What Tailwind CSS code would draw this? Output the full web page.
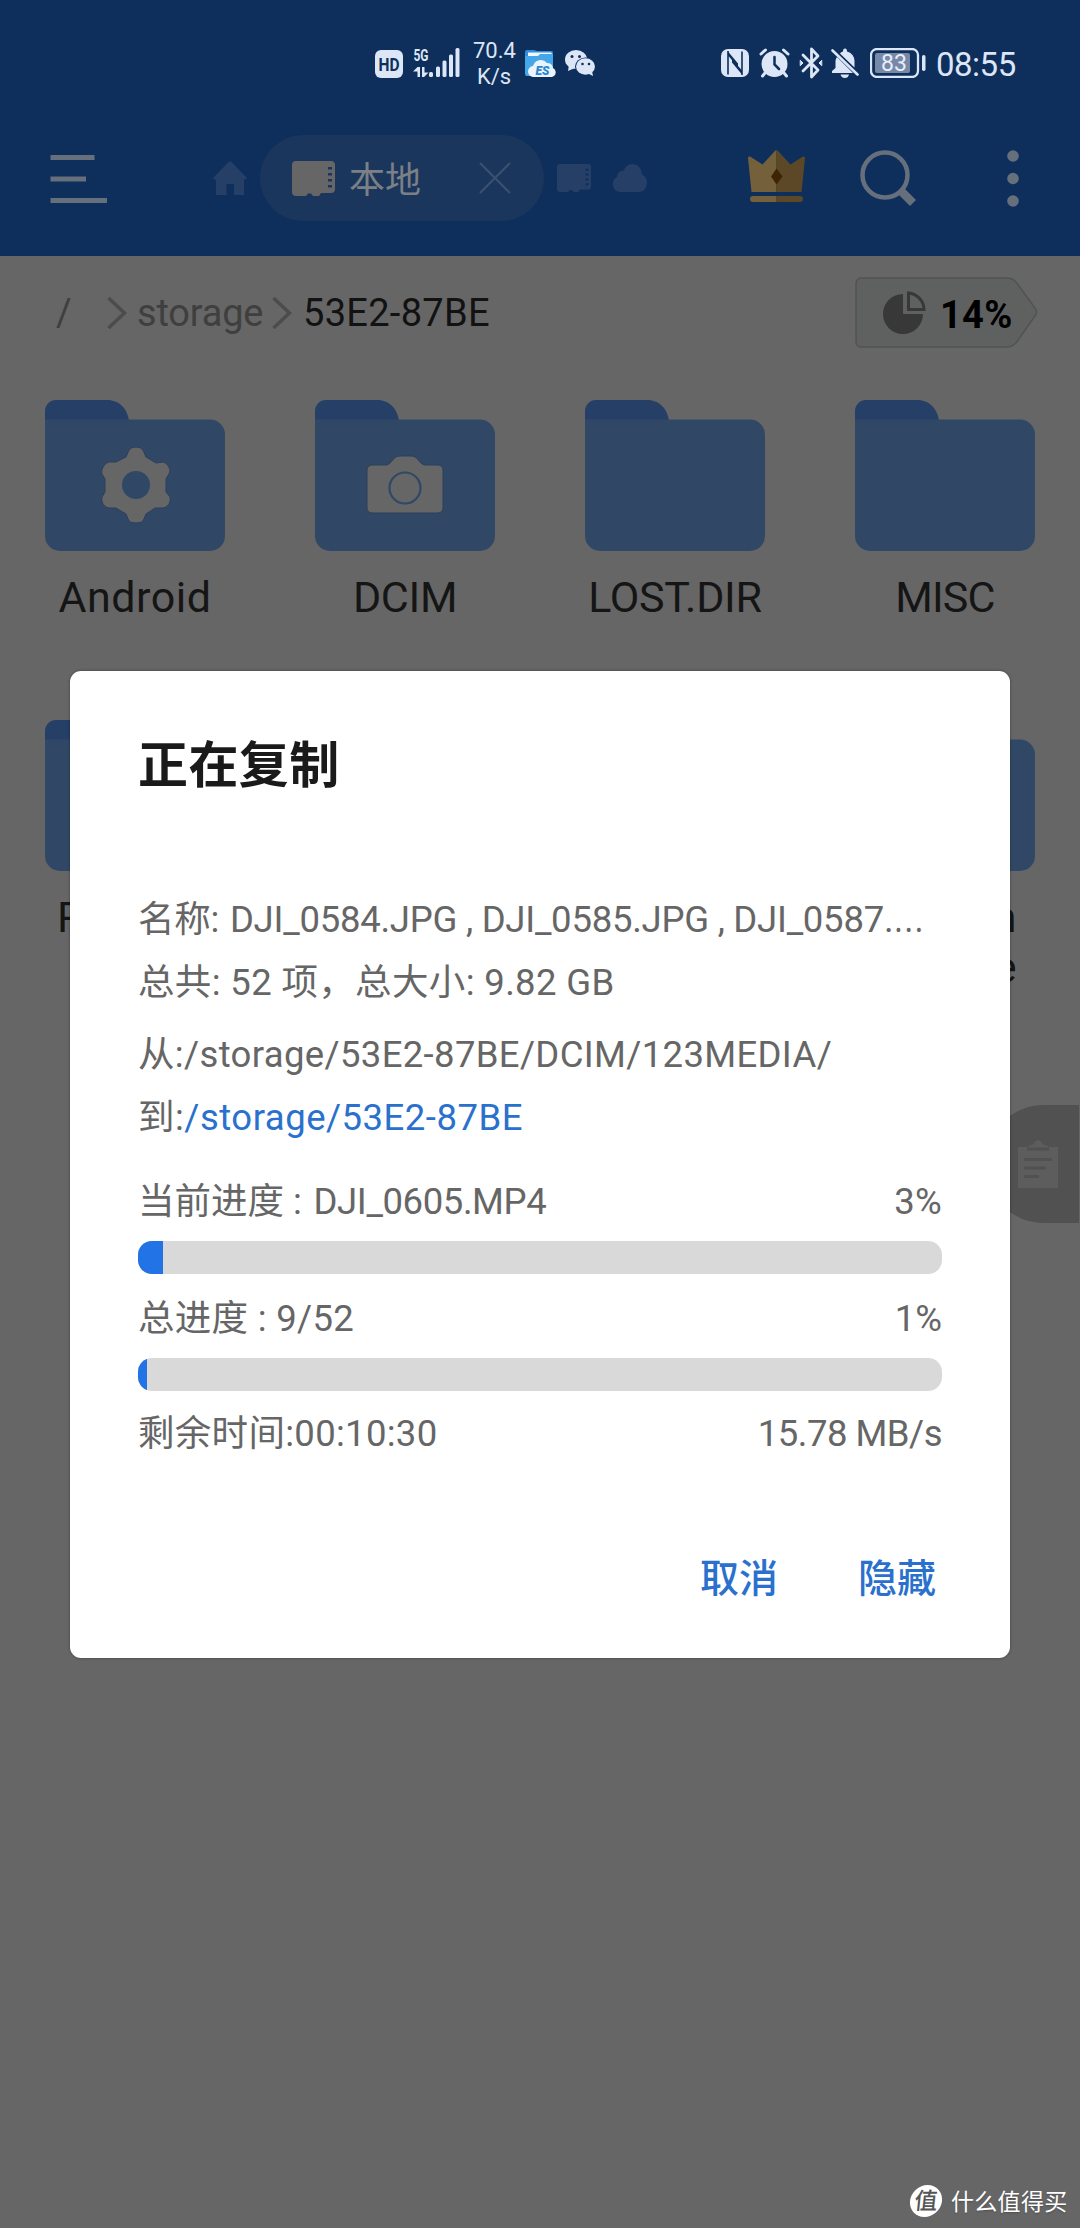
<!DOCTYPE html>
<html lang="zh-CN">
<head>
    <meta charset="UTF-8">
    <title>正在复制</title>
    <script src="https://cdn.jsdelivr.net/npm/@tailwindcss/browser@4"></script>
</head>
<body class="relative w-[1080px] h-[2228px] overflow-hidden bg-[#666666] font-[Roboto,'Noto_Sans_CJK_SC',sans-serif] text-[#151515]">

    <!-- shared shapes -->
    <svg class="hidden">
        <symbol id="folder" viewBox="0 0 180 151">
            <path d="M0 30V11A11 11 0 0 1 11 0H62C75 0 83 9 84.500 24V30Z" fill="#253f66"/>
            <path d="M0 19.500H165A15 15 0 0 1 180 34.500V136A15 15 0 0 1 165 151H15A15 15 0 0 1 0 136Z" fill="#304866"/>
        </symbol>
        <symbol id="sdcard" viewBox="0 0 43 35">
            <path fill-rule="evenodd" d="M4 0H39A4 4 0 0 1 43 4V28A4 4 0 0 1 39 32H29L27 35H21L19 32.500H16L14 35H4A4 4 0 0 1 0 31V4A4 4 0 0 1 4 0ZM36 6V8.500H40V6ZM36 12V14.500H40V12ZM36 18V20.500H40V18ZM36 24V26.500H40V24Z"/>
        </symbol>
    </svg>

    <header class="h-[256px] bg-[#0e2f5c]">
        <!-- status bar -->
        <div class="flex items-center h-[126px] pl-[375px] text-[#dce6f6]">
            <svg class="w-7 h-7 mt-0.5" viewBox="0 0 28 28">
                <rect width="28" height="28" rx="6" fill="#dce6f6"/>
                <text x="3.500" y="20.500" font-size="18" font-weight="700" textLength="21" lengthAdjust="spacingAndGlyphs" fill="#0e2f5c">HD</text>
            </svg>
            <svg class="w-[48px] h-[30px] ml-2.5 overflow-visible" viewBox="0 0 48 30" fill="#dce6f6">
                <text x="0.500" y="13" font-size="17" font-weight="700" textLength="15" lengthAdjust="spacingAndGlyphs">5G</text>
                <path d="M0 23.500L4.500 19H7V29H4.500V23.500ZM9 19H11.500V24.500H15.500L11 29H9Z"/>
                <rect x="16" y="24" width="4" height="5" rx="1.500"/>
                <rect x="23" y="18.500" width="4" height="10.500" rx="1.500"/>
                <rect x="29.500" y="12.500" width="4" height="16.500" rx="1.500"/>
                <rect x="36" y="6.500" width="4" height="22.500" rx="1.500"/>
                <rect x="42.500" y="0" width="4" height="29" rx="1.500"/>
            </svg>
            <div class="w-[42px] ml-3 pt-0.5 text-center text-[22px] leading-[26px]">70.4<br>K/s</div>
            <svg class="w-8 h-7 ml-2.5" viewBox="0 0 32 28">
                <path d="M0 3A2 2 0 0 1 2 1H9L12 2H27A2 2 0 0 1 28 4V24H0Z" fill="#2f8fd8"/>
                <path d="M3 3.500H26L28 6V8H3Z" fill="#f2f8ff"/>
                <path d="M0 7H13L15 5H28V25A2 2 0 0 1 26 27H2A2 2 0 0 1 0 25Z" fill="#46a6ea"/>
                <path d="M9 28A5.500 5.500 0 0 1 8 17A8 8 0 0 1 22 14A6 6 0 0 1 28 19A4.800 4.800 0 0 1 27 28Z" fill="#eaf4ff"/>
                <text x="10.500" y="26" font-size="12" font-weight="900" font-style="italic" textLength="14" lengthAdjust="spacingAndGlyphs" fill="#2b86cf">ES</text>
            </svg>
            <svg class="w-[31px] h-[26px] ml-2" viewBox="0 0 31 26">
                <ellipse cx="11" cy="9.500" rx="11" ry="9.500" fill="#dce6f6"/>
                <path d="M4 15L3 21L10 18Z" fill="#dce6f6"/>
                <ellipse cx="20.500" cy="16.500" rx="10.500" ry="9" fill="#0e2f5c"/>
                <ellipse cx="20.500" cy="16.500" rx="9.500" ry="8.200" fill="#dce6f6"/>
                <path d="M22 23L28 26L27 21Z" fill="#dce6f6"/>
                <g fill="#0e2f5c">
                    <circle cx="7" cy="6.500" r="1.500"/><circle cx="14.500" cy="6.500" r="1.500"/>
                    <circle cx="17.500" cy="14" r="1.300"/><circle cx="24" cy="14" r="1.300"/>
                </g>
            </svg>
            <svg class="w-7 h-7 ml-[125px]" viewBox="0 0 28 28">
                <rect width="28" height="28" rx="7" fill="#dce6f6"/>
                <path d="M7 2V25.500M21 2.500V26" fill="none" stroke="#0e2f5c" stroke-width="1.600"/>
                <path d="M7 2.500L17 14.500V18L7 6.500ZM21 25.500L11 13.500V10L21 21.500Z" fill="#0e2f5c"/>
            </svg>
            <svg class="w-[31px] h-[30px] ml-2.5" viewBox="0 0 31 30" fill="none" stroke="#dce6f6" stroke-width="3" stroke-linecap="round">
                <circle cx="15.500" cy="16" r="13" fill="#dce6f6" stroke="none"/>
                <path d="M2 6L6.500 2M29 6L24.500 2M6 25L3.500 28M25 25L27.500 28"/>
                <path d="M15.500 9V16.500L20 21" stroke="#0e2f5c" stroke-width="2.500"/>
            </svg>
            <svg class="w-6 h-8 ml-[9px]" viewBox="0 0 24 32" fill="none" stroke="#dce6f6" stroke-width="2.800" stroke-linejoin="round" stroke-linecap="round">
                <path d="M4 8L19 23L12.500 30V2L19 9L4 24"/>
                <path d="M1.500 13.500L4 16L1.500 18.500ZM22.500 13.500L20 16L22.500 18.500Z" fill="#dce6f6" stroke-width="1"/>
            </svg>
            <svg class="w-7 h-[30px] ml-2" viewBox="0 0 28 30" fill="#dce6f6">
                <path d="M6 9L22 25H1V23L4.500 20V13Q4.500 11 6 9ZM9 5.500Q10 4 12 3.500Q12 0.500 14 0.500Q16 0.500 16 3.500Q23 5.500 23.500 13V19.500Z"/>
                <path d="M9.500 26.500H18Q17 30 14 30Q10.500 30 9.500 26.500Z"/>
                <path d="M1.500 2.500L26.500 26.500" stroke="#dce6f6" stroke-width="2.600" stroke-linecap="round"/>
            </svg>
            <svg class="w-14 h-[30px] ml-[11px]" viewBox="0 0 56 30">
                <rect x="1" y="1" width="47" height="28" rx="6" fill="none" stroke="#dce6f6" stroke-width="2.300"/>
                <rect x="5" y="5" width="35" height="20" rx="2" fill="#7789a6"/>
                <rect x="52" y="7" width="3.500" height="16" rx="1.700" fill="#dce6f6"/>
                <text x="24" y="23" text-anchor="middle" font-size="23" fill="#e6eefa">83</text>
            </svg>
            <div class="ml-[10px] pt-[3px] text-[33px] tracking-[-0.5px]">08:55</div>
        </div>

        <!-- toolbar -->
        <div class="flex items-center h-[104px] pl-[50px]">
            <svg class="w-[57px] h-12 mt-0.5" viewBox="0 0 57 48" fill="#666f7c">
                <rect x="0.500" width="44" height="5"/><rect x="0.500" y="21.500" width="35.500" height="5"/><rect x="0.500" y="43" width="56.500" height="5"/>
            </svg>
            <svg class="w-[34px] h-[34px] ml-[106px]" viewBox="0 0 34 34" fill="#263f66">
                <path d="M16 0.500Q17 0 18 0.500L34 17L32 18.500H31V34H21V23H13.500V34H3V18.500H1L0 17Z"/>
            </svg>
            <div class="flex items-center w-[284px] h-[86px] ml-[13px] pl-8 rounded-full bg-[#1b365c]">
                <svg class="w-[43px] h-[35px]" fill="#666666"><use href="#sdcard"/></svg>
                <span class="ml-[14px] pt-[5px] text-[36px] leading-none text-[#7b8087]">本地</span>
                <svg class="w-8 h-8 ml-[58px]" viewBox="0 0 32 32" stroke="#3a5070" stroke-width="2.200"><path d="M1 1L31 31M31 1L1 31"/></svg>
            </div>
            <svg class="w-[34px] h-7 ml-[13px]" viewBox="0 0 43 35" fill="#263f66" preserveAspectRatio="none"><use href="#sdcard"/></svg>
            <svg class="w-[34px] h-7 ml-[22px]" viewBox="0 0 34 28" fill="#263f66">
                <path d="M8 28A8 8 0 0 1 4 13Q4 7 11 6.500Q13 0 19.500 0Q28 0.500 29 10.500Q34 13 34 19Q33 28 25 28Z"/>
            </svg>
            <svg class="w-[57px] h-[52px] -mt-1 ml-[101px]" viewBox="0 0 57 52">
                <path d="M28.500 0Q27.500 0 26 2L14.500 14.500L2 6.500Q0 6 0 8L3.500 42H28.500Z" fill="#74613b"/>
                <path d="M28.500 0Q29.500 0 31 2L42.500 14.500L55 6.500Q57 6 57 8L53.500 42H28.500Z" fill="#5c4827"/>
                <path d="M28.500 18.500L34.500 26.500L28.500 34.500L23 26.500Z" fill="#3d2503"/>
                <path d="M28.500 46H5A3 3 0 0 0 5 52H28.500Z" fill="#74613b"/>
                <path d="M28.500 46H52A3 3 0 0 1 52 52H28.500Z" fill="#5c4827"/>
            </svg>
            <svg class="w-[58px] h-[57px] ml-[55px]" viewBox="0 0 58 57" fill="none" stroke="#666f7c">
                <circle cx="25" cy="25" r="22.500" stroke-width="4.500"/>
                <path d="M40 40L53 53" stroke-width="8.500"/>
            </svg>
            <svg class="w-3 h-[57px] ml-[89px]" viewBox="0 0 12 57" fill="#666f7c">
                <circle cx="6" cy="6" r="5.800"/><circle cx="6" cy="28.500" r="5.800"/><circle cx="6" cy="51" r="5.800"/>
            </svg>
        </div>
    </header>

    <!-- breadcrumb -->
    <nav class="flex items-center h-[112px] pl-[56px] text-[38px] leading-none whitespace-nowrap text-[#3f3f3f]">
        <span class="w-[51px] pt-0.5">/</span>
        <svg class="w-5 h-8 mt-0.5" viewBox="0 0 20 32" fill="none" stroke="#4c4c4c" stroke-width="3.500"><path d="M1.500 1L17.500 16L1.500 31"/></svg>
        <span class="w-[125px] ml-[10px] pt-0.5 tracking-[-0.2px]">storage</span>
        <svg class="w-5 h-8 mt-0.5 ml-[10px]" viewBox="0 0 20 32" fill="none" stroke="#4c4c4c" stroke-width="3.500"><path d="M1.500 1L17.500 16L1.500 31"/></svg>
        <span class="w-[186px] ml-[11px] pt-0.5 tracking-[0.3px] text-[#121212]">53E2-87BE</span>
        <div class="relative flex items-center w-[183px] h-[71px] ml-[366px]">
            <svg class="absolute inset-0 w-full h-full" viewBox="0 0 183 71">
                <path d="M6 1H152Q157 1 161 5L180 31Q183 35 180 39L161 66Q157 70 152 70H6A5 5 0 0 1 1 65V6A5 5 0 0 1 6 1Z" fill="#5f6161" stroke="#515353" stroke-width="1.500"/>
            </svg>
            <svg class="relative w-[43px] h-[43px] ml-7" viewBox="0 0 43 43">
                <path d="M20 3A20 20 0 1 0 40 23H20Z" fill="#383838"/>
                <path d="M25.500 2A17 17 0 0 1 41 18.500H25.500Z" fill="none" stroke="#383838" stroke-width="3"/>
            </svg>
            <span class="relative ml-[14px] pt-1.5 font-bold tracking-[0.3px] text-black">14%</span>
        </div>
    </nav>

    <!-- file grid -->
    <main class="grid grid-cols-4 gap-y-[58px] pt-8 text-center text-[43px] leading-[50px]">
        <div class="flex flex-col items-center h-[262px]">
            <svg class="w-[180px] h-[151px]" viewBox="0 0 180 151">
                <use href="#folder"/>
                <path d="M84 50Q86 47 91 47Q96 47 98 50L101 57L111 63L118 62Q121 62 124 67Q126 71 124 74L121 79V92L125 97Q126 100 124 104Q121 108 118 108L110 108L101 114L98 121Q96 123 91 123Q86 123 84 121L81 114L71 108L64 108Q61 108 58 104Q56 100 57 97L60 92V79L57 74Q56 71 58 67Q61 62 64 62L71 62L81 57Z" fill="#666666" stroke="#2b405c"/>
                <circle cx="91" cy="85" r="14" fill="#304866"/>
            </svg>
            <div class="mt-[21px] tracking-[0.5px]">Android</div>
        </div>
        <div class="flex flex-col items-center">
            <svg class="w-[180px] h-[151px]" viewBox="0 0 180 151">
                <use href="#folder"/>
                <path d="M57 65H71Q73 65 75 63L80 57.500Q82 56 85 56H96Q99 56 101 57.500L106 63Q108 65 110 65H123A5 5 0 0 1 128 70V108A5 5 0 0 1 123 113H57A5 5 0 0 1 52 108V70A5 5 0 0 1 57 65Z" fill="#666666" stroke="#2b405c"/>
                <circle cx="90" cy="88" r="15.500" fill="none" stroke="#304866" stroke-width="2.200"/>
            </svg>
            <div class="mt-[21px] tracking-[-0.3px]">DCIM</div>
        </div>
        <div class="flex flex-col items-center">
            <svg class="w-[180px] h-[151px]"><use href="#folder"/></svg>
            <div class="mt-[21px] tracking-[-0.3px]">LOST.DIR</div>
        </div>
        <div class="flex flex-col items-center">
            <svg class="w-[180px] h-[151px]"><use href="#folder"/></svg>
            <div class="mt-[21px] tracking-[-0.8px]">MISC</div>
        </div>
        <div class="flex flex-col items-center">
            <svg class="w-[180px] h-[151px]"><use href="#folder"/></svg>
            <div class="w-[156px] mt-[21px] text-left">P</div>
        </div>
        <div class="col-start-4 flex flex-col items-center">
            <svg class="w-[180px] h-[151px]"><use href="#folder"/></svg>
            <div class="w-[143px] mt-[21px] text-right">n<br>e</div>
        </div>
    </main>

    <!-- clipboard handle -->
    <div class="absolute right-px top-[1105px] flex items-center w-[94px] h-[118px] pl-[33px] rounded-l-full bg-[#515151]">
        <svg class="w-10 h-12" viewBox="0 0 40 48">
            <path d="M0 7H40V48H0Z" fill="#5d5d5d"/>
            <path d="M10 9V6Q16 5 17 1.500Q20 -1 23 1.500Q24 5 30 6V9Z" fill="#5d5d5d"/>
            <path d="M9 9H31M6 19.500H34M6 28H28M6 36.500H21" stroke="#515151" stroke-width="3"/>
        </svg>
    </div>

    <!-- copy dialog -->
    <section class="absolute left-[70px] top-[671px] w-[940px] h-[987px] px-[68px] rounded-[11px] bg-white text-[36.5px] leading-[63px] text-[#666666] shadow-[0_0_3px_rgba(0,0,0,0.4)]">
        <h1 class="pt-[64px] text-[50px] font-bold tracking-[0.4px] text-[#1a1a1a]">正在复制</h1>
        <div class="h-[63px] mt-[90px] whitespace-nowrap tracking-[-0.25px]">名称:<span class="ml-0.5"> DJI_0584.JPG , DJI_0585.JPG , DJI_0587.</span><span class="font-['Noto_Sans'] text-[42px] leading-none font-light">…</span></div>
        <div class="tracking-[0.35px]">总共: 52 项，总大小: 9.82 GB</div>
        <div class="mt-[9px] tracking-[0.35px]">从:/storage/53E2-87BE/DCIM/123MEDIA/</div>
        <div class="tracking-[0.5px]">到:<span class="text-[#2a71cd]">/storage/53E2-87BE</span></div>
        <div class="flex justify-between mt-[21px]"><span>当前进度 :<span class="ml-[3px] tracking-[-0.4px]"> DJI_0605.MP4</span></span><span class="tracking-[0.3px]">3%</span></div>
        <div class="h-[33px] mt-2 rounded-[14px] overflow-hidden bg-[#d9d9d9]">
            <div class="h-full bg-[#2273e6]" style="width: 25px"></div>
        </div>
        <div class="flex justify-between mt-[13px]"><span class="tracking-[0.3px]">总进度 : 9/52</span><span>1%</span></div>
        <div class="h-[33px] mt-2 rounded-[14px] overflow-hidden bg-[#d9d9d9]">
            <div class="h-full bg-[#2273e6]" style="width: 9px"></div>
        </div>
        <div class="flex justify-between mt-[11px]"><span class="tracking-[0.3px]">剩余时间:00:10:30</span><span class="tracking-[-0.5px]">15.78 MB/s</span></div>
        <div class="flex justify-end gap-20 pt-[83px] pr-1.5 text-[39px] font-medium text-[#2a71cd]">
            <button>取消</button>
            <button>隐藏</button>
        </div>
    </section>

    <!-- watermark -->
    <div class="absolute left-[910px] top-[2185px] flex items-center gap-[9px] h-8 text-[23px] leading-none text-white">
        <span class="flex items-center justify-center w-8 h-8 rounded-full bg-white text-[#555555] font-medium -skew-x-6">值</span>
        <span class="pt-0.5 whitespace-nowrap tracking-[0.3px] text-shadow-sm">什么值得买</span>
    </div>
</body>
</html>
